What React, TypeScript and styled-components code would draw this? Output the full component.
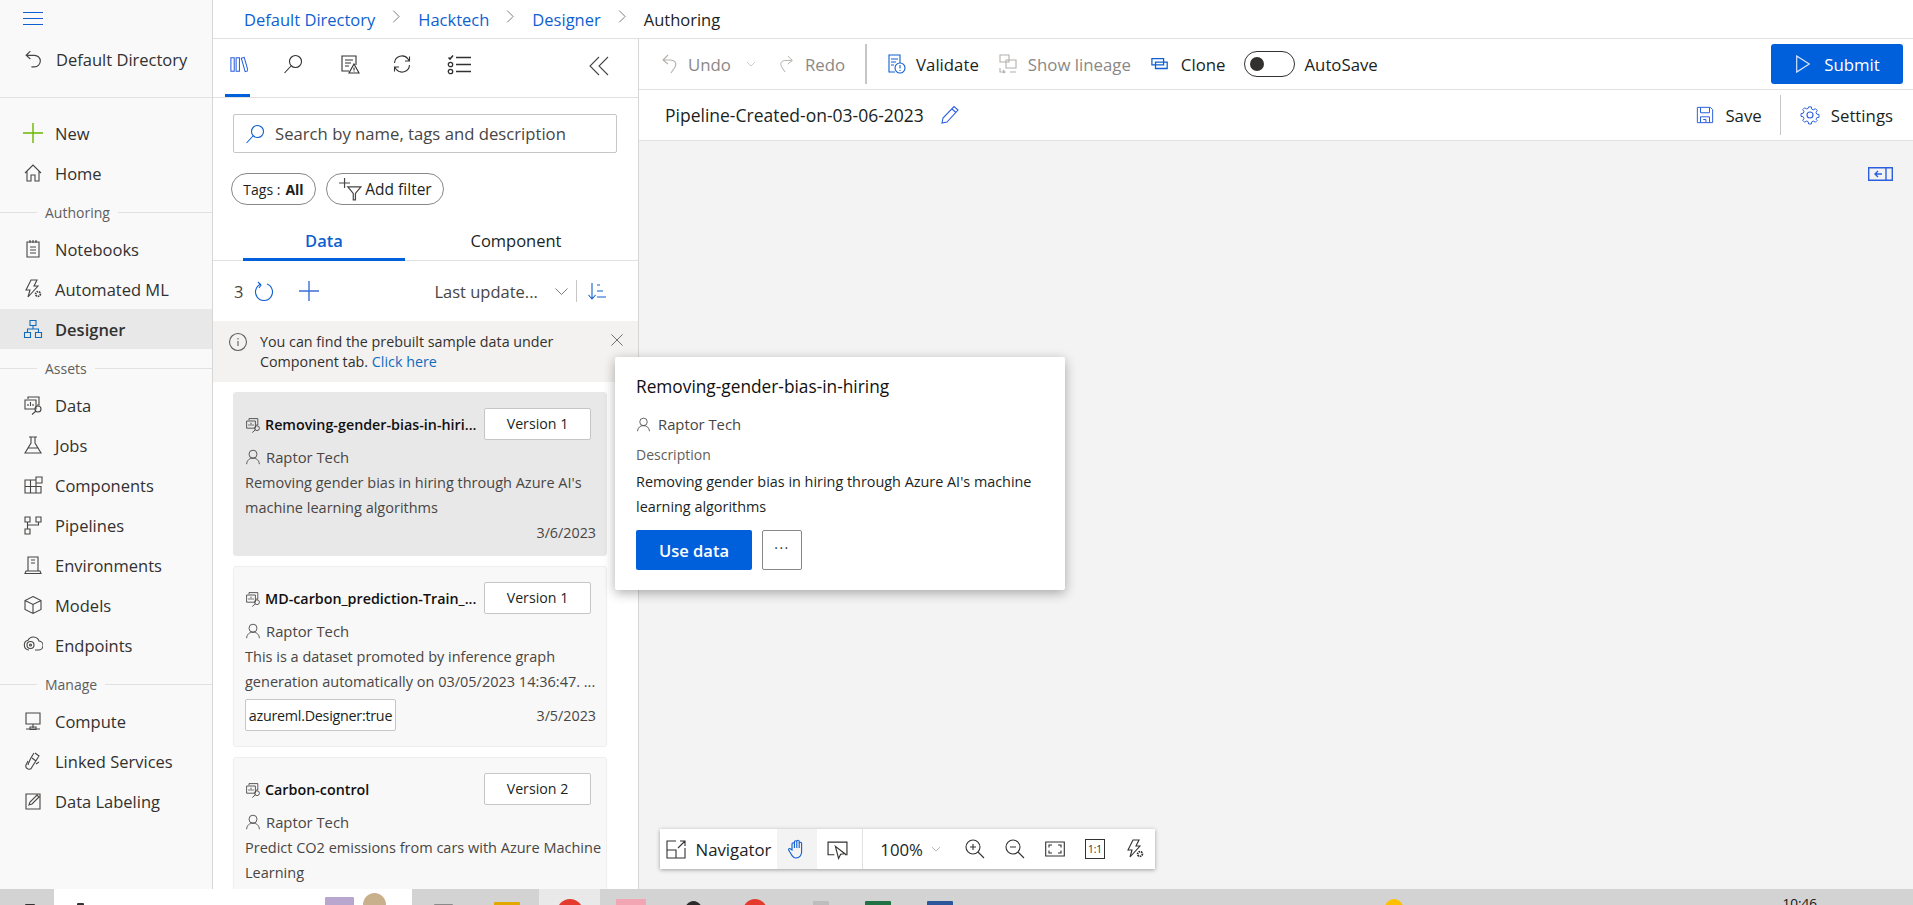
import React from "react";
import styled, { createGlobalStyle } from "styled-components";

const Global = createGlobalStyle`
  html, body { margin: 0; padding: 0; height: 905px; overflow: hidden; background: #fff; }
  * { box-sizing: border-box; }
  body { font-family: "Open Sans", "Noto Sans", "Liberation Sans", sans-serif; color: #201f1e; }
`;

const Root = styled.div`display:flex;flex-direction:column;width:1913px;height:905px;overflow:hidden;position:relative;`;
const Main = styled.div`display:flex;height:889px;`;

/* ---- icons ---- */
const Svg = styled.svg<{ $c?: string; $w?: number; $h?: number }>`
  width:${p => p.$w ?? 20}px;height:${p => p.$h ?? p.$w ?? 20}px;flex:none;display:block;
  fill:none;stroke:${p => p.$c ?? "#484644"};stroke-width:1.1;
`;
type IP = { c?: string; w?: number };
const I = ({ c, w, children }: IP & { children: React.ReactNode }) => <Svg $c={c} $w={w} viewBox="0 0 20 20">{children}</Svg>;
const IBack = (p: IP) => <I {...p}><path d="M7 2 3 6l4 3.500M3.500 6H11a5.500 5.500 0 0 1 0 11H8" /></I>;
const IPlus = (p: IP) => <I {...p}><path d="M10 0v20M0 10h20" strokeWidth="1.4" /></I>;
const IHome = (p: IP) => <I {...p}><path d="M2 10 10 2l8 8M4 8v10h4v-6h4v6h4V8" /></I>;
const INote = (p: IP) => <I {...p}><path d="M4 3h12v15H4zM7 1v3M10 1v3M13 1v3M7 8h6M7 11h6M7 14h6" /></I>;
const IAuto = (p: IP) => <I {...p}><path d="M8 1h6l-3 6h4L5 18l2-7H3z" /><circle cx="15" cy="15" r="2.400" strokeWidth="1.8" strokeDasharray="1.500 .7" /></I>;
const IDesigner = (p: IP) => <I {...p}><path d="M7 1.500h6v5H7zM1.500 13.500h6v5h-6zM12.500 13.500h6v5h-6zM10 6.500V10M4.500 13.500V10h11v3.500" /></I>;
const IData = (p: IP) => <I {...p}><path d="M5 4V2h11v8h-2M2 5h11v9H2zM5 11V9M7.500 11V7M10 11V9" /><circle cx="15" cy="14" r="3" /><path d="m13 16-4 3.500" /></I>;
const IJobs = (p: IP) => <I {...p}><path d="M6 2h8M8 2v6L2 18h16l-6-10V2M5 13h10" /></I>;
const IComp = (p: IP) => <I {...p}><path d="M2 5h11v13H2zM2 11.500h11M7.500 5v13M13 11.500h5V18h-5M13 2h6v6h-6z" /></I>;
const IPipe = (p: IP) => <I {...p}><path d="M2 2h5v5H2zM13 2h5v5h-5zM2 14h5v5H2zM4.500 7v7M15.500 7v3h-11" /></I>;
const IEnv = (p: IP) => <I {...p}><path d="M5 2h10v14H5zM2 18.500h16l-1-2.500H3zM8 5h4M8 8h4" /></I>;
const IModel = (p: IP) => <I {...p}><path d="M10 1.500 18 5.500v9L10 18.500 2 14.500v-9zM2 5.500 10 9.500l8-4M10 9.500v9" /></I>;
const IEnd = (p: IP) => <I {...p}><path d="M6 15a5 5 0 0 1-1-9.800A6 6 0 0 1 16 6a4.500 4.500 0 0 1-1 9h-3" /><circle cx="7.500" cy="10" r="3.500" /><circle cx="7.500" cy="10" r="1" /></I>;
const ICompute = (p: IP) => <I {...p}><path d="M3 2h14v11H3zM10 13v4M3 18h14M7 16h6v2.500H7z" /></I>;
const ILink = (p: IP) => <I {...p}><path d="M12 2l4 3-7 11a3 3 0 0 1-6-2l2-4M9 7l4 3M13 13l3-2" /><path d="M11 2c-2 3-5 8-6 12" /></I>;
const ILabel = (p: IP) => <I {...p}><path d="M3 3h14v15H3zM6 14l1-3 7-7 2 2-7 7z" /></I>;
const ILib = (p: IP) => <I {...p}><path d="M2 3h3.500v14H2zM7.500 3H11v14H7.500zM13 3.500l3-1 4 14-3 1z" /></I>;
const ISearch = (p: IP) => <I {...p}><circle cx="12.500" cy="7.500" r="6" /><path d="M8 12 1.500 19" /></I>;
const IDocWarn = (p: IP) => <I {...p}><path d="M9 17H2V2h14v9M5 6h8M5 9h6M5 12h4" /><path d="M14 10l5 9H9z" /><path d="M14 13.500v3M14 17.500v.5" /></I>;
const ISync = (p: IP) => <I {...p}><path d="M2.500 9A7.500 7.500 0 0 1 16 5l1.500 2M17.500 2.500V7H13M17.500 11A7.500 7.500 0 0 1 4 15l-1.500-2M2.500 17.500V13H7" /></I>;
const IChecks = (p: IP) => <Svg $c={p.c} $w={p.w} viewBox="0 0 25 20"><path d="M1.500 3l1.500 1.500L6 1M9 3h15M9 10h15M9 17h15" strokeWidth="1.600" /><circle cx="3.500" cy="10" r="2.200" strokeWidth="1.300" /><circle cx="3.500" cy="17" r="2.200" strokeWidth="1.300" /></Svg>;
const IDoubleL = (p: IP) => <I {...p}><path d="M10 1 1 10l9 9M19 1l-9 9 9 9" /></I>;
const IFilter = (p: IP) => <Svg $c={p.c} $w={p.w} viewBox="0 0 22 22"><path d="M6 1v9M1 5.500h10" /><path d="M9 9h12l-5 6v6h-2v-6z" /></Svg>;
const IRefresh = (p: IP) => <I {...p}><path d="M7 3a8.500 8.500 0 1 0 6 0M4 1l3 3-2 3" /></I>;
const IChevD = (p: IP) => <I {...p}><path d="M2 6l8 8 8-8" /></I>;
const IChevR = (p: IP) => <I {...p}><path d="M5 1l9 9-9 9" /></I>;
const ISort = (p: IP) => <I {...p}><path d="M5 2v16M1.500 14 5 18l3.500-4M10 4h3M10 10h6M10 16h9" /></I>;
const IInfo = (p: IP) => <I {...p}><circle cx="10" cy="10" r="8.500" /><path d="M10 9v5M10 6v1.400" /></I>;
const IX = (p: IP) => <I {...p}><path d="M3 3l14 14M17 3 3 17" /></I>;
const IPerson = (p: IP) => <I {...p}><circle cx="10" cy="6.500" r="5" /><path d="M2 19c.5-5 3.500-7.500 8-7.500s7.500 2.500 8 7.500" /></I>;
const IUndo = (p: IP) => <I {...p}><path d="M8 1 3 6l5 4M3 6h7c5 0 7 3 5 7l-4 6" /></I>;
const IRedo = (p: IP) => <I {...p}><path d="M12 1l5 5-5 4M17 6h-7C5 6 3 9 5 13l4 6" /></I>;
const IValidate = (p: IP) => <I {...p}><path d="M9 18H3V1h11v8M5 5h7M5 8h5M5 11h3" /><circle cx="14" cy="14" r="5" /><path d="M14 11v3.500M14 16v1" /></I>;
const ILineage = (p: IP) => <I {...p}><path d="M2 1h9v7H2zM8 6h10v8H8zM2 14v4h4M5 16l2 2-2 1M12 18h6" /></I>;
const IClone = (p: IP) => <I {...p}><path d="M1 4h13v7H1zM5 8h13v7H5z" strokeWidth="1.400" /></I>;
const IPlay = (p: IP) => <I {...p}><path d="M3 1l14 9-14 9z" strokeWidth="1.300" /></I>;
const IPencil = (p: IP) => <I {...p}><path d="M2 18l1-5L14 1.500 18 5 7 17zM12 4l4 3.500" /></I>;
const ISave = (p: IP) => <I {...p}><path d="M1.500 1.500h14.500l2.500 2.500v14.500h-17zM5 1.500v6h10v-6M5 18.500V12h10v6.500M8 15h3v3.500" /></I>;
const IGear = (p: IP) => <I {...p}><circle cx="10" cy="10" r="3" /><path d="M8.500 1h3l.5 2.500 1.700.8L16 3l2 2-1.300 2.300.8 1.700 2.500.5v3l-2.500.5-.8 1.700L18 16l-2 2-2.300-1.300-1.700.8-.5 2.500h-3l-.5-2.500-1.700-.8L4 18l-2-2 1.300-2.300-.8-1.700L0 11.500v-3l2.500-.5.8-1.700L2 4l2-2 2.300 1.300 1.700-.8z" transform="translate(1 1) scale(.9)" /></I>;
const IPanel = (p: IP) => <Svg $c={p.c} $w={p.w} $h={14} viewBox="0 0 25 14"><path d="M.7.700h23.600v12.600H.7zM18 .700v12.600" strokeWidth="1.400" /><path d="M14 7H7M10 4 7 7l3 3" strokeWidth="1.400" /></Svg>;
const INav = (p: IP) => <I {...p}><path d="M10 2H1v17h18V9M1 11h9v8M12 9l7-7M14 2h5v5" /></I>;
const IHand = (p: IP) => <I {...p}><path d="M5 11V5a1.200 1.200 0 0 1 2.400 0v4-6a1.200 1.200 0 0 1 2.400 0v6-6.500a1.200 1.200 0 0 1 2.400 0V9V4.500a1.200 1.200 0 0 1 2.400 0V13c0 3-2 6-5.500 6-3 0-4-2-5-4l-2.500-4c-.5-1.200 1-2 2-1z" /></I>;
const ICursor = (p: IP) => <I {...p}><path d="M7 15H1V3h18v12h-2M8 7l9 7-4 .5-2 4z" /></I>;
const IZoomIn = (p: IP) => <I {...p}><circle cx="8" cy="8" r="7" /><path d="M13 13l6 6M8 5v6M5 8h6" /></I>;
const IZoomOut = (p: IP) => <I {...p}><circle cx="8" cy="8" r="7" /><path d="M13 13l6 6M5 8h6" /></I>;
const IFit = (p: IP) => <I {...p}><path d="M.7 3h18.600v14H.7zM7 6H4v2.500M13 6h3v2.500M7 14H4v-2.500M13 14h3v-2.500" /></I>;

/* ---- left nav ---- */
const Sidebar = styled.nav`width:213px;flex:none;background:#f9f9f9;border-right:1px solid #d6d6d6;display:flex;flex-direction:column;`;
const SideHead = styled.div`height:98px;flex:none;border-bottom:1px solid #e1e1e1;padding-left:23px;display:flex;flex-direction:column;`;
const Hamburger = styled.div`
  width:20px;height:13px;margin-top:12px;border-top:1px solid #0f5fd0;border-bottom:1px solid #0f5fd0;position:relative;
  &::after{content:"";position:absolute;left:0;right:0;top:5px;height:1px;background:#0f5fd0;}
`;
const BackRow = styled.div`display:flex;align-items:center;gap:12px;margin-top:22px;height:24px;font-size:16.500px;color:#323130;`;
const NavList = styled.div`padding-top:15px;display:flex;flex-direction:column;`;
const NavRow = styled.div<{ $active?: boolean }>`
  height:40px;display:flex;align-items:center;gap:12px;padding-left:23px;font-size:16.500px;color:#323130;
  background:${p => (p.$active ? "#e8e8e8" : "transparent")};font-weight:${p => (p.$active ? 600 : 400)};
`;
const NavSection = styled.div`
  height:36px;display:flex;align-items:center;font-size:14px;color:#605e5c;padding-top:2px;
  &::before{content:"";width:37px;height:1px;background:#e1e1e1;margin-right:8px;}
  &::after{content:"";flex:1;height:1px;background:#e1e1e1;margin-left:8px;}
`;

/* ---- right column ---- */
const Content = styled.div`flex:1;display:flex;flex-direction:column;min-width:0;`;
const Breadcrumbs = styled.div`height:39px;flex:none;display:flex;align-items:center;border-bottom:1px solid #e1e1e1;padding-left:31px;font-size:16.500px;`;
const Crumb = styled.span<{ $link?: boolean }>`color:${p => (p.$link ? "#0f5fd0" : "#201f1e")};`;
const CrumbSep = styled.span`width:43px;display:flex;justify-content:center;margin-top:-6px;`;
const Work = styled.div`flex:1;display:flex;min-height:0;`;

/* ---- asset panel ---- */
const Panel = styled.section`width:426px;flex:none;border-right:1px solid #d6d6d6;background:#fff;display:flex;flex-direction:column;overflow:hidden;`;
const PanelTabs = styled.div`height:59px;flex:none;border-bottom:1px solid #e1e1e1;display:flex;align-items:center;padding:0 0 8px 16px;position:relative;`;
const PanelTab = styled.div<{ $w: number }>`width:${p => p.$w}px;flex:none;display:flex;`;
const PanelUnderline = styled.div`position:absolute;left:12px;bottom:0;width:25px;height:3px;background:#005fdb;`;
const PanelCollapse = styled.div`margin-left:auto;margin-right:29px;margin-top:4px;`;
const SearchBox = styled.div`height:39px;margin:16px 21px 0 20px;border:1px solid #c8c6c4;border-radius:2px;display:flex;align-items:center;gap:10px;padding-left:11px;font-size:16.700px;color:#484644;flex:none;`;
const ChipRow = styled.div`display:flex;gap:10px;margin:20px 0 0 18px;flex:none;`;
const Chip = styled.div<{ $w: number; $fs: number; $gap: number }>`height:32px;width:${p => p.$w}px;border:1px solid #8a8886;border-radius:16px;display:flex;align-items:center;justify-content:center;font-size:${p => p.$fs}px;gap:${p => p.$gap}px;b{font-weight:700;margin-left:4px;}`;
const TabRow = styled.div`height:56px;margin-top:0;flex:none;display:flex;border-bottom:1px solid #e1e1e1;padding-left:30px;`;
const DataTab = styled.div<{ $active?: boolean; $w: number }>`
  width:${p => p.$w}px;display:flex;align-items:flex-end;justify-content:center;padding-bottom:6px;font-size:16.500px;
  color:${p => (p.$active ? "#0f5fd0" : "#201f1e")};font-weight:${p => (p.$active ? 600 : 400)};
  border-bottom:${p => (p.$active ? "3px solid #005fdb" : "3px solid transparent")};margin-bottom:-1px;
`;
const CountRow = styled.div`height:60px;flex:none;display:flex;align-items:center;padding-left:21px;font-size:16.500px;color:#484644;`;
const Gap = styled.span<{ $w: number }>`width:${p => p.$w}px;flex:none;`;
const SortLabel = styled.span`margin-left:115px;width:120px;color:#484644;white-space:nowrap;`;
const VSep = styled.span`width:1px;height:22px;background:#c8c6c4;margin:0 10px 0 7px;`;
const InfoBar = styled.div`height:61px;flex:none;background:#f3f2f1;display:flex;padding:11px 0 0 15px;gap:12px;font-size:14.300px;line-height:20px;color:#323130;position:relative;a{color:#0f6cbd;}`;
const InfoClose = styled.div`position:absolute;right:13px;top:11px;`;
const CardList = styled.div`flex:1;padding:10px 0 0 20px;display:flex;flex-direction:column;gap:10px;overflow:hidden;`;
const Card = styled.article<{ $active?: boolean; $h: number }>`
  width:374px;height:${p => p.$h}px;flex:none;border-radius:3px;padding:16px 10px 0 11px;
  background:${p => (p.$active ? "#e8e8e8" : "#f8f8f8")};border:1px solid ${p => (p.$active ? "#e8e8e8" : "#eeeeee")};
`;
const CardTop = styled.div`display:flex;align-items:center;height:31px;gap:4px;`;
const CardTitle = styled.div`flex:1;min-width:0;font-size:14.300px;font-weight:600;white-space:nowrap;color:#11100f;overflow:hidden;`;
const Version = styled.div`width:107px;height:32px;flex:none;margin-right:5px;background:#fff;border:1px solid #c8c6c4;border-radius:2px;display:flex;align-items:center;justify-content:center;font-size:14.200px;margin-top:-2px;`;
const Owner = styled.div`display:flex;align-items:center;gap:5px;height:25px;margin-top:4px;font-size:14.800px;color:#484644;`;
const Desc = styled.div`font-size:14.500px;line-height:25px;margin-top:1px;color:#484644;white-space:nowrap;`;
const CardFoot = styled.div`display:flex;align-items:center;justify-content:space-between;height:25px;font-size:14.300px;color:#484644;`;
const TagFoot = styled(CardFoot)`height:32px;margin-top:5px;`;
const Tag = styled.span`height:32px;width:151px;background:#fff;border:1px solid #c8c6c4;border-radius:2px;display:flex;align-items:center;justify-content:center;color:#201f1e;font-size:14.300px;white-space:nowrap;letter-spacing:-.25px;`;
const DateText = styled.span`margin-left:auto;`;

/* ---- canvas side ---- */
const Editor = styled.div`flex:1;display:flex;flex-direction:column;min-width:0;`;
const Toolbar = styled.div`height:51px;flex:none;border-bottom:1px solid #e1e1e1;display:flex;align-items:center;padding-left:21px;font-size:16.800px;`;
const Tool = styled.div<{ $off?: boolean; $ml?: number; $gap?: number }>`display:flex;align-items:center;gap:${p => p.$gap ?? 10}px;margin-left:${p => p.$ml ?? 0}px;color:${p => (p.$off ? "#8a8886" : "#201f1e")};white-space:nowrap;`;
const ToolSep = styled.span`width:2px;height:40px;background:#c8c6c4;margin:0 19px 0 20px;`;
const Toggle = styled.div`width:51px;height:26px;border:1px solid #323130;border-radius:13px;padding:5px 0 0 5px;&::before{content:"";display:block;width:14px;height:14px;border-radius:50%;background:#323130;}`;
const Submit = styled.button`width:132px;height:40px;margin-left:auto;margin-right:10px;background:#005fdb;border:0;border-radius:3px;color:#fff;font:inherit;display:flex;align-items:center;justify-content:center;gap:12px;padding:0;`;
const TitleBar = styled.div`height:51px;flex:none;border-bottom:1px solid #e1e1e1;display:flex;align-items:center;padding-left:26px;font-size:16.800px;`;
const PipelineName = styled.div`font-weight:500;font-size:17.500px;color:#201f1e;margin-right:16px;white-space:nowrap;`;
const TitleActions = styled.div`margin-left:auto;display:flex;align-items:center;padding-right:20px;`;
const TitleSep = styled.span`width:1px;height:40px;background:#c8c6c4;margin:0 19px 0 18px;`;
const Canvas = styled.div`flex:1;background:#f3f3f3;position:relative;`;
const CanvasToggle = styled.div`position:absolute;top:26px;right:20px;`;
const NavigatorBar = styled.div`position:absolute;left:21px;bottom:20px;height:40px;width:495px;background:#fff;box-shadow:0 1px 4px rgba(0,0,0,.35);display:flex;align-items:center;font-size:16.800px;`;
const NavBtn = styled.div<{ $w: number; $on?: boolean; $ml?: number }>`width:${p => p.$w}px;margin-left:${p => p.$ml ?? 0}px;height:100%;flex:none;display:flex;align-items:center;justify-content:center;background:${p => (p.$on ? "#f3f3f3" : "transparent")};gap:10px;`;
const NavSep = styled.span`width:1px;height:100%;background:#e1e1e1;margin:0 18px 0 5px;`;
const RatioBox = styled.div`width:20px;height:20px;border:1.500px solid #323130;font-size:10px;display:flex;align-items:center;justify-content:center;color:#323130;`;

/* ---- hover card ---- */
const Popup = styled.aside`position:absolute;left:615px;top:357px;width:450px;height:233px;background:#fff;border-radius:2px;box-shadow:0 3px 12px rgba(0,0,0,.32);padding:19px 20px 0 21px;z-index:5;`;
const PopTitle = styled.div`font-size:17.300px;font-weight:500;line-height:22px;color:#11100f;`;
const PopOwner = styled.div`display:flex;align-items:center;gap:7px;height:24px;margin-top:14px;font-size:14.800px;color:#484644;`;
const PopLabel = styled.div`font-size:14px;line-height:20px;margin-top:9px;color:#605e5c;`;
const PopDesc = styled.div`font-size:14.400px;line-height:25px;margin-top:4px;color:#201f1e;white-space:nowrap;`;
const PopActions = styled.div`display:flex;gap:10px;margin-top:11px;`;
const UseData = styled.button`width:116px;height:40px;background:#005fdb;color:#fff;border:0;border-radius:2px;font:inherit;font-size:16.500px;font-weight:600;`;
const More = styled.button`width:40px;height:40px;background:#fff;border:1px solid #8a8886;border-radius:2px;font:inherit;font-size:14px;letter-spacing:1.500px;color:#323130;padding:0 0 6px;`;

/* ---- windows taskbar peeking in ---- */
const Taskbar = styled.div`height:16px;flex:none;background:#d3d3d3;display:flex;overflow:hidden;position:relative;`;
const TaskSearch = styled.div`width:358px;height:16px;margin-left:19px;background:#fff;flex:none;display:flex;overflow:hidden;`;
const Peek = styled.span<{ $ml: number; $w: number; $c: string; $round?: boolean; $top?: number }>`
  flex:none;display:block;margin-left:${p => p.$ml}px;width:${p => p.$w}px;height:${p => p.$w}px;min-height:24px;margin-top:${p => p.$top ?? 10}px;
  background:${p => p.$c};border-radius:${p => (p.$round ? "50%" : "1px")};
`;
const PeekHi = styled.div`width:61px;margin-left:19px;background:#e9e9e9;height:16px;flex:none;display:flex;justify-content:center;`;
const Clock = styled.span`margin-left:auto;margin-right:96px;margin-top:5px;font-size:13.500px;color:#111;`;

const nav1 = [
  [IPlus, "New", "#6bb700"],
  [IHome, "Home"],
] as const;
const authoring = [[INote, "Notebooks"], [IAuto, "Automated ML"]] as const;
const assets = [[IData, "Data"], [IJobs, "Jobs"], [IComp, "Components"], [IPipe, "Pipelines"], [IEnv, "Environments"], [IModel, "Models"], [IEnd, "Endpoints"]] as const;
const manage = [[ICompute, "Compute"], [ILink, "Linked Services"], [ILabel, "Data Labeling"]] as const;

const Row = ({ Icon, text, color, active }: { Icon: (p: IP) => React.ReactElement; text: string; color?: string; active?: boolean }) => (
  <NavRow $active={active}><Icon c={color} w={20} />{text}</NavRow>
);

const Chev = () => <CrumbSep><IChevR w={13} c="#484644" /></CrumbSep>;

export default function App() {
  return (
    <Root>
      <Global />
      <Main>
        <Sidebar>
          <SideHead>
            <Hamburger />
            <BackRow><IBack w={21} />Default Directory</BackRow>
          </SideHead>
          <NavList>
            {nav1.map(n => <Row key={n[1]} Icon={n[0]} text={n[1]} color={n[2]} />)}
            <NavSection>Authoring</NavSection>
            {authoring.map(n => <Row key={n[1]} Icon={n[0]} text={n[1]} />)}
            <Row Icon={IDesigner} text="Designer" color="#0f6cbd" active />
            <NavSection>Assets</NavSection>
            {assets.map(n => <Row key={n[1]} Icon={n[0]} text={n[1]} />)}
            <NavSection>Manage</NavSection>
            {manage.map(n => <Row key={n[1]} Icon={n[0]} text={n[1]} />)}
          </NavList>
        </Sidebar>
        <Content>
          <Breadcrumbs>
            <Crumb $link>Default Directory</Crumb><Chev />
            <Crumb $link>Hacktech</Crumb><Chev />
            <Crumb $link>Designer</Crumb><Chev />
            <Crumb>Authoring</Crumb>
          </Breadcrumbs>
          <Work>
            <Panel>
              <PanelTabs>
                <PanelTab $w={54}><ILib w={19} c="#2b5fe0" /></PanelTab>
                <PanelTab $w={57}><ISearch c="#323130" /></PanelTab>
                <PanelTab $w={52}><IDocWarn c="#323130" /></PanelTab>
                <PanelTab $w={55}><ISync c="#323130" /></PanelTab>
                <PanelTab $w={30}><IChecks w={25} c="#323130" /></PanelTab>
                <PanelCollapse><IDoubleL c="#484644" /></PanelCollapse>
                <PanelUnderline />
              </PanelTabs>
              <SearchBox><ISearch c="#0f5fd0" />Search by name, tags and description</SearchBox>
              <ChipRow>
                <Chip $w={85} $fs={14} $gap={1}>Tags :<b>All</b></Chip>
                <Chip $w={118} $fs={15.5} $gap={3}><IFilter w={24} c="#484644" />Add filter</Chip>
              </ChipRow>
              <TabRow>
                <DataTab $active $w={162}>Data</DataTab>
                <DataTab $w={222}>Component</DataTab>
              </TabRow>
              <CountRow>
                3
                <Gap $w={11} />
                <IRefresh c="#0f5fd0" />
                <Gap $w={25} />
                <IPlus c="#3b6fd8" />
                <SortLabel>Last update...</SortLabel>
                <IChevD w={15} c="#605e5c" />
                <VSep />
                <ISort c="#0f5fd0" />
              </CountRow>
              <InfoBar>
                <IInfo c="#605e5c" />
                <div>You can find the prebuilt sample data under<br />Component tab. <a>Click here</a></div>
                <InfoClose><IX w={16} c="#605e5c" /></InfoClose>
              </InfoBar>
              <CardList>
                <Card $active $h={164}>
                  <CardTop><IData w={16} /><CardTitle>Removing-gender-bias-in-hiri...</CardTitle><Version>Version 1</Version></CardTop>
                  <Owner><IPerson w={16} />Raptor Tech</Owner>
                  <Desc>Removing gender bias in hiring through Azure AI's<br />machine learning algorithms</Desc>
                  <CardFoot><DateText>3/6/2023</DateText></CardFoot>
                </Card>
                <Card $h={181}>
                  <CardTop><IData w={16} /><CardTitle>MD-carbon_prediction-Train_...</CardTitle><Version>Version 1</Version></CardTop>
                  <Owner><IPerson w={16} />Raptor Tech</Owner>
                  <Desc>This is a dataset promoted by inference graph<br />generation automatically on 03/05/2023 14:36:47. ...</Desc>
                  <TagFoot><Tag>azureml.Designer:true</Tag><DateText>3/5/2023</DateText></TagFoot>
                </Card>
                <Card $h={160}>
                  <CardTop><IData w={16} /><CardTitle>Carbon-control</CardTitle><Version>Version 2</Version></CardTop>
                  <Owner><IPerson w={16} />Raptor Tech</Owner>
                  <Desc>Predict CO2 emissions from cars with Azure Machine<br />Learning</Desc>
                </Card>
              </CardList>
            </Panel>
            <Editor>
              <Toolbar>
                <Tool $off $gap={8}><IUndo c="#b3b0ad" w={20} />Undo</Tool>
                <Tool $ml={15}><IChevD w={10} c="#a19f9d" /></Tool>
                <Tool $off $ml={21} $gap={10}><IRedo c="#b3b0ad" w={18} />Redo</Tool>
                <ToolSep />
                <Tool><IValidate c="#0f5fd0" />Validate</Tool>
                <Tool $off $ml={19}><ILineage c="#b3b0ad" />Show lineage</Tool>
                <Tool $ml={20} $gap={12}><IClone c="#0f5fd0" w={18} />Clone</Tool>
                <Tool $ml={19} $gap={9}><Toggle />AutoSave</Tool>
                <Submit><IPlay c="#dbe8ff" w={18} />Submit</Submit>
              </Toolbar>
              <TitleBar>
                <PipelineName>Pipeline-Created-on-03-06-2023</PipelineName>
                <IPencil w={20} c="#2b5fe0" />
                <TitleActions>
                  <Tool $gap={11}><ISave w={18} c="#2b5fe0" />Save</Tool>
                  <TitleSep />
                  <Tool $gap={11}><IGear c="#2b5fe0" />Settings</Tool>
                </TitleActions>
              </TitleBar>
              <Canvas>
                <CanvasToggle><IPanel w={25} c="#2b5fe0" /></CanvasToggle>
                <NavigatorBar>
                  <NavBtn $w={117}><INav c="#323130" />Navigator</NavBtn>
                  <NavBtn $w={40} $on><IHand c="#0f5fd0" /></NavBtn>
                  <NavBtn $w={40}><ICursor c="#323130" w={21} /></NavBtn>
                  <NavSep />
                  <Tool $gap={8}>100%<IChevD w={10} c="#8a8886" /></Tool>
                  <NavBtn $w={40} $ml={14}><IZoomIn c="#323130" /></NavBtn>
                  <NavBtn $w={40}><IZoomOut c="#323130" /></NavBtn>
                  <NavBtn $w={40}><IFit c="#323130" /></NavBtn>
                  <NavBtn $w={40}><RatioBox>1:1</RatioBox></NavBtn>
                  <NavBtn $w={40}><IAuto c="#323130" /></NavBtn>
                </NavigatorBar>
              </Canvas>
            </Editor>
          </Work>
        </Content>
      </Main>
      <Popup>
        <PopTitle>Removing-gender-bias-in-hiring</PopTitle>
        <PopOwner><IPerson w={15} />Raptor Tech</PopOwner>
        <PopLabel>Description</PopLabel>
        <PopDesc>Removing gender bias in hiring through Azure AI's machine<br />learning algorithms</PopDesc>
        <PopActions><UseData>Use data</UseData><More>···</More></PopActions>
      </Popup>
      <Taskbar>
        <Peek $ml={25} $w={10} $c="#333333" $top={15} />
        <TaskSearch>
          <Peek $ml={23} $w={7} $c="#333333" $top={14} />
          <Peek $ml={241} $w={29} $c="#b9a6cf" $top={8} />
          <Peek $ml={9} $w={23} $c="#c8b08c" $round $top={4} />
        </TaskSearch>
        <Peek $ml={22} $w={19} $c="#8a8a8a" $top={15} />
        <Peek $ml={41} $w={26} $c="#e2a800" $top={13} />
        <PeekHi><Peek $ml={0} $w={26} $c="#e53b2e" $round /></PeekHi>
        <Peek $ml={16} $w={30} $c="#f2a6b4" />
        <Peek $ml={38} $w={19} $c="#2b2b2b" $round $top={12} />
        <Peek $ml={40} $w={24} $c="#e53b2e" $round />
        <Peek $ml={46} $w={16} $c="#bdbdbd" $top={12} />
        <Peek $ml={36} $w={26} $c="#217346" $top={12} />
        <Peek $ml={36} $w={26} $c="#2b579a" $top={12} />
        <Peek $ml={431} $w={20} $c="#ffc000" $round />
        <Clock>10:46</Clock>
      </Taskbar>
    </Root>
  );
}
